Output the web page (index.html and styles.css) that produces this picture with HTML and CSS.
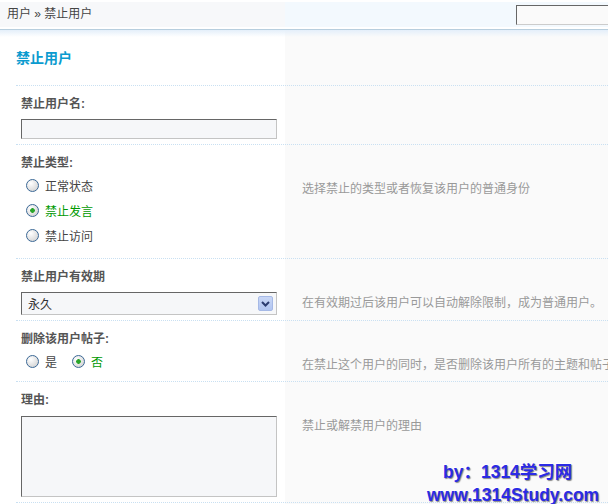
FILE: index.html
```html
<!doctype html>
<html>
	<head>
		<meta charset="utf-8">
		<title>禁止用户</title>

		<link rel="stylesheet" href="styles.css">
	</head>
	<body>
		<div class="topbar">
			<div class="crumb">用户 &raquo; 禁止用户</div>
			<div class="search"><input type="text" class="searchbox"></div>
		</div>

		<div class="main">
			<h3 class="title">禁止用户</h3>

			<div class="row">
				<div class="field">
					<div class="label">禁止用户名:</div>
					<input type="text" class="txt">
				</div>
				<div class="tip"></div>
			</div>

			<div class="row">
				<div class="field">
					<div class="label">禁止类型:</div>
					<ul class="choices">
						<li><input type="radio" name="bantype" class="radio"> 正常状态</li>
						<li class="checked"><input type="radio" name="bantype" class="radio" checked> 禁止发言</li>
						<li><input type="radio" name="bantype" class="radio"> 禁止访问</li>
					</ul>
				</div>
				<div class="tip">选择禁止的类型或者恢复该用户的普通身份</div>
			</div>

			<div class="row">
				<div class="field">
					<div class="label">禁止用户有效期</div>
					<div class="select">
						<span>永久</span>
						<span class="arrow">
							<svg width="9" height="6" viewBox="0 0 9 6"><path d="M1 1 L4.5 4.5 L8 1" fill="none" stroke="#2b3c70" stroke-width="2"/></svg>
						</span>
					</div>
				</div>
				<div class="tip">在有效期过后该用户可以自动解除限制，成为普通用户。</div>
			</div>

			<div class="row">
				<div class="field">
					<div class="label">删除该用户帖子:</div>
					<ul class="choices inline">
						<li><input type="radio" name="delpost" class="radio"> 是</li>
						<li class="checked"><input type="radio" name="delpost" class="radio" checked> 否</li>
					</ul>
				</div>
				<div class="tip">在禁止这个用户的同时，是否删除该用户所有的主题和帖子</div>
			</div>

			<div class="row last">
				<div class="field">
					<div class="label">理由:</div>
					<textarea class="area"></textarea>
				</div>
				<div class="tip">禁止或解禁用户的理由</div>
			</div>

			<div class="watermark">
				<div class="by">by：1314学习网</div>
				<div class="site">www.1314Study.com</div>
			</div>
		</div>
	</body>
</html>
```

FILE: styles.css
```css
html, body {
	margin: 0;
	padding: 0;
	overflow: hidden;
}

body {
	background: #fff;
	color: #333;
	font-family: "Liberation Sans", "Noto Sans CJK SC", sans-serif;
	font-size: 12px;
}

	.topbar {
		display: flex;
		padding: 2px 0;
		border-bottom: 1px solid #b7cede;
		background: #fff;
	}

	.crumb {
		width: 278px;
		height: 25px;
		line-height: 25px;
		padding-left: 7px;
		background: #f7f8fa;
		color: #444;
		white-space: nowrap;
	}

	.search {
		flex: 1;
		display: flex;
		justify-content: flex-end;
		background: #f3f9fe;
		overflow: hidden;
	}

	.searchbox {
		flex: none;
		width: 100px;
		height: 20px;
		margin: 3px -8px 0 0;
		padding: 0;
		box-sizing: border-box;
		border: 1px solid #ccc;
		border-top-color: #666;
		border-left-color: #666;
		background: #fafafa;
	}

	.main {
		position: relative;
		height: 480px;
		padding-left: 16px;
		background:
			linear-gradient(to bottom, #e4effa, rgba(255,255,255,0) 7px),
			linear-gradient(to right, #fff 285px, #fafafa 285px);
	}

	.title {
		margin: 0;
		padding: 18px 0 17px;
		line-height: 20px;
		font-size: 14px;
		font-weight: bold;
		color: #0b9bcf;
	}

	.row {
		display: grid;
		grid-template-columns: 269px 1fr;
		border-top: 1px dotted #c9e0f2;
	}

	.row.last {
		border-bottom: 1px dotted #c9e0f2;
	}

	.field {
		padding: 10px 0 5px 5px;
	}

	.label {
		line-height: 16px;
		font-weight: bold;
		color: #555;
	}

	.tip {
		padding: 36px 0 0 17px;
		line-height: 16px;
		color: #999;
		white-space: nowrap;
	}

	.txt, .select, .area {
		display: block;
		width: 256px;
		margin: 7px 0 0;
		padding: 0;
		box-sizing: border-box;
		border: 1px solid #c4c4c4;
		border-top-color: #666;
		border-left-color: #666;
		background: #f6f7f9;
		font-family: inherit;
		font-size: 12px;
	}

	.txt {
		height: 20px;
	}

	.select {
		display: flex;
		align-items: center;
		justify-content: space-between;
		height: 23px;
		padding: 0 3px 0 6px;
		color: #333;
	}

	.select .arrow {
		display: flex;
		align-items: center;
		justify-content: center;
		width: 15px;
		height: 15px;
		box-sizing: border-box;
		border: 1px solid #a6b9e6;
		border-radius: 2px;
		background: linear-gradient(#c9d7f6, #b1c5f1);
	}

	.area {
		height: 81px;
		margin-top: 8px;
		resize: none;
	}

	.choices {
		list-style: none;
		margin: 2px 0 5px;
		padding: 0 0 0 5px;
	}

	.choices li {
		display: flex;
		align-items: center;
		height: 25px;
		color: #444;
	}

	.choices li.checked {
		color: #090;
	}

	.choices.inline {
		display: flex;
		margin-bottom: 2px;
	}

	.choices.inline li {
		margin-right: 15px;
	}

	.radio {
		-webkit-appearance: none;
		appearance: none;
		width: 13px;
		height: 13px;
		margin: 0 6px 0 0;
		box-sizing: border-box;
		border: 1px solid #3b6896;
		border-radius: 50%;
		background: radial-gradient(circle at 35% 30%, #fff, #d6d6d6 80%);
	}

	.radio:checked {
		background:
			radial-gradient(circle, #2aa52a 0, #2aa52a 2px, rgba(0,0,0,0) 2.6px),
			radial-gradient(circle at 35% 30%, #fff, #d6d6d6 80%);
	}

	.watermark {
		position: absolute;
		left: 427px;
		top: 432px;
		font-family: "Liberation Sans", "Noto Sans CJK SC", sans-serif;
		font-size: 17.5px;
		font-weight: bold;
		line-height: 20px;
		color: #2b2be6;
		text-shadow: 1px 1px 1px #888, -1px -1px 0 #fff;
		white-space: nowrap;
	}

	.watermark .by {
		margin-left: 16px;
		margin-bottom: 3px;
	}
```
